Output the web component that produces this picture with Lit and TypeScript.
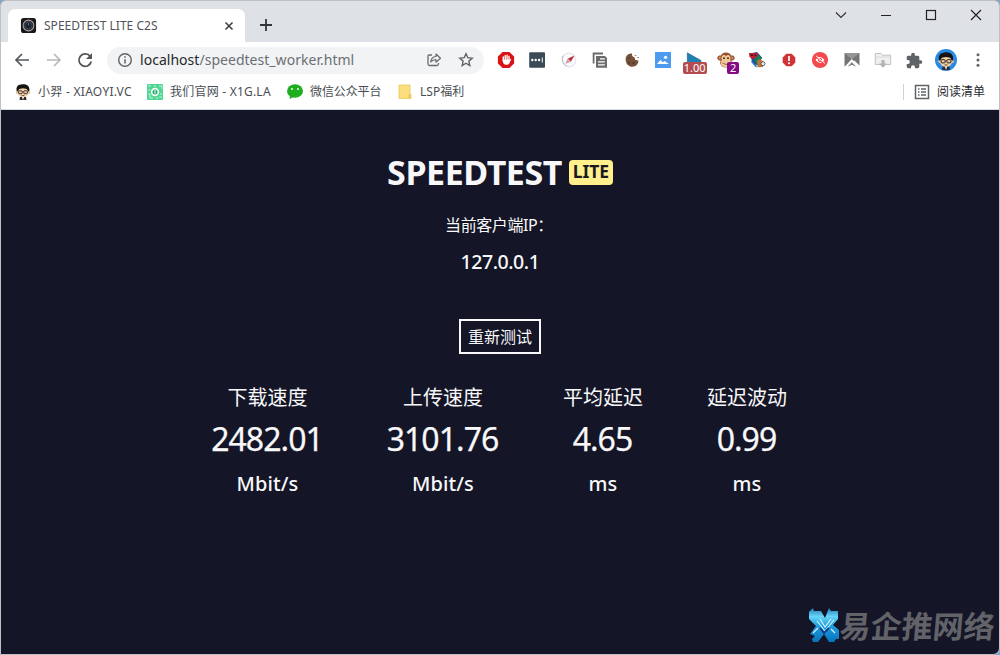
import { LitElement, html, css, svg } from "lit";
import { customElement } from "lit/decorators.js";

const box = (body: unknown, size = 18) =>
  html`<svg width=${size} height=${size} viewBox="0 0 18 18" fill="none">${body}</svg>`;

const face = svg`
  <path d="M6 14 L9 13 L12 14 L12.500 17 H5.500Z" fill="#2c2c2e"/>
  <path d="M8 14h2l-1 3z" fill="#fff"/>
  <ellipse cx="9" cy="9.300" rx="5.700" ry="5" fill="#f0cfab"/>
  <circle cx="3" cy="9.500" r="1.200" fill="#e6bd95"/><circle cx="15" cy="9.500" r="1.200" fill="#e6bd95"/>
  <path d="M2.800 8.500C1.800 4 3.500 1.800 7 1.500c5-1.300 9.300 1 8.300 7L13.800 8 12.800 6 9 5.300 5.200 6 4.200 8z" fill="#171411"/>
  <rect x="4.600" y="7.800" width="3.600" height="2.900" rx=".8" stroke="#2b211c" stroke-width=".9"/>
  <rect x="9.800" y="7.800" width="3.600" height="2.900" rx=".8" stroke="#2b211c" stroke-width=".9"/>
  <path d="M8.200 8.800h1.600M7.700 12.500h2.600" stroke="#5b3b30" stroke-width=".8"/>`;

const extensions = [
  box(svg`<path d="M5.600.9h6.800l4.700 4.700v6.800l-4.700 4.700H5.600L.9 12.400V5.600z" fill="#db1214"/>
    <path d="M6.300 9.500V6M8.200 9V4.600M10.100 9V4.200M12 9V5.400" stroke="#fff" stroke-width="1.400" stroke-linecap="round"/>
    <path d="M5.600 8.700h7l.9-.9c.5-.3.900.1.600.6L12.300 12.600c-1 1.600-4.300 1.700-5.500.2-.8-1-1.200-2.300-1.200-4.100z" fill="#fff"/>`),
  box(svg`<rect x="1.200" y="1.300" width="15.800" height="15.400" rx="1" fill="#3a4b57"/>
    <circle cx="4.300" cy="9" r="1.200" fill="#fff"/><circle cx="7.700" cy="9" r="1.200" fill="#fff"/><circle cx="11.100" cy="9" r="1.200" fill="#fff"/><path d="M14.300 6.500v5" stroke="#fff"/>`),
  box(svg`<circle cx="9" cy="9" r="6.800" fill="#fafbfc" stroke="#e2e5ea" stroke-width="1.200"/><path d="M3.500 4.500C.8 8 3 13.500 7 15" stroke="#aebbd0"/>
    <path d="M5.500 12.500 8 7.500 14.500 4.500 11 10.500z" fill="#bd3145"/><path d="M5.500 12.500 8 7.500l3 3z" fill="#dca7ad"/>`),
  box(svg`<path d="M2.600 12.500V2.500H12" stroke="#6b6b6b" stroke-width="1.800"/><path d="M5 5h9l2 2v9.800H5z" fill="#6b6b6b"/>
    <path d="M9 7.800h4.800M7 10.800h6.800M7 13.800h6.800" stroke="#fff" stroke-width="1.300"/>`),
  box(svg`<path d="M9 2.600C5 2 2.300 5.200 2.700 9.200c.4 4.200 3.300 6.500 6.600 6.500 3.500 0 6.200-2.700 6.100-6.200l-3-.5-1-2.500L9.200 5z" fill="#765139"/>
    <path d="M11.500 4.500h2M14 6.500h2" stroke="#9b7b67" stroke-width=".8"/><circle cx="6" cy="7" r=".8" fill="#4b3222"/><circle cx="6" cy="11.800" r=".9" fill="#4b3222"/><circle cx="10.500" cy="12" r=".9" fill="#4b3222"/>`),
  box(svg`<path d="M1 1h16v16H1z" fill="#4d9bef"/><path d="m3 13 3.400-4 2.400 2.300 1.800-1.400L15 13z" fill="#fff"/><circle cx="11.600" cy="6.300" r="1.600" fill="#fff"/>`),
  html`${box(svg`<path d="M2.300 1.800 16 9.500v3H2.300z" fill="#1e81b3" stroke="#175e82" stroke-width=".6"/>`)}<span class="badge rate">1.00</span>`,
  html`${box(svg`<circle cx="2.900" cy="7" r="2.100" fill="#dd8050" stroke="#74402b"/><circle cx="15.100" cy="7" r="2.100" fill="#dd8050" stroke="#74402b"/>
    <path d="M4 4.500C5 .5 13 .5 14 4.500l.8 7.800C14 18 4 18 3.200 12.300z" fill="#9a5030"/><path d="M4.800 8.500C3.500 4 8 2.500 9 5.500c1-3 5.500-1.500 4.200 3l1.100 4c-1 5-9.600 5-10.600 0z" fill="#f1c898"/>
    <circle cx="7" cy="7.200" r=".9" fill="#2b1710"/><circle cx="11" cy="7.200" r=".9" fill="#2b1710"/><path d="M5.500 12q3.500 3 7 0" stroke="#8d482d" stroke-width=".8"/>`)}<span class="badge count">2</span>`,
  box(svg`<path d="M1.500 2.500 9 1l5 5.500-3.500 8L5 13z" fill="#244b9b"/><path d="M1 2h8.500v3.500L5 8 1.500 6z" fill="#c71f2d"/><path d="m6 9 5-5 3 3-5 6z" fill="#178154"/>
    <path d="M2.500 4.200H5M6.500 4.200H8" stroke="#321a23" stroke-width="1.500"/><path d="M9 10.500 11 8l4 2v6l-5.500.3z" fill="#ba753c"/><circle cx="15" cy="12.700" r="2" fill="#eee" stroke="#333" stroke-width=".7"/><path d="m3.500 10 5 6" stroke="#2879bd" stroke-width="1.500"/>`),
  box(svg`<path d="M6.300 2.800h5.400l3.600 3.600v5.200l-3.600 3.600H6.300l-3.600-3.600V6.400z" fill="#cf3439"/><path d="M9 5.100v4.800" stroke="#fff" stroke-width="1.700"/><circle cx="9" cy="12.300" r="1" fill="#fff"/>`),
  box(svg`<circle cx="9" cy="9" r="8.100" fill="#f4494d"/><path d="M4.500 9q4.500-6 9 0-4.500 6-9 0z" fill="#fff"/><circle cx="9" cy="9" r="1.700" stroke="#f4494d"/><path d="m4.700 5.700 8.800 7.500" stroke="#f4494d"/><path d="m5.100 4.900 8.800 7.500" stroke="#fff"/>`),
  box(svg`<path d="M1.500 2h15v12.500l-5-5-10 6z" fill="#757575"/><path d="M1.500 2h15L8.800 8.500z" fill="#959595"/><path d="m1.500 16 7.300-8 7.700 8-3.400-.2-4.300-4.300-4.300 4.300z" fill="#fff"/><path d="m4.500 15.800 4.300-4.600 4.300 4.600-4.300-2z" fill="#777"/>`),
  box(svg`<path d="M1.300 2.500h5.500l1.700 1.700h8.200v9.300H1.300z" fill="#efefef" stroke="#c2c2c2"/><path d="M2 6h14" stroke="#dadada"/><path d="M7.500 9h3v3.500H13L9 16.800 5 12.500h2.500z" fill="#b3b3b3"/>`),
  html`<svg width="17" height="17" viewBox="1 0 23 23"><path fill="#5f6368" d="M20.500 11H19V7a2 2 0 0 0-2-2h-4V3.500a2.500 2.500 0 0 0-5 0V5H4a2 2 0 0 0-2 2v3.800h1.500a2.700 2.700 0 0 1 0 5.400H2V20a2 2 0 0 0 2 2h3.800v-1.500a2.700 2.700 0 0 1 5.400 0V22H17a2 2 0 0 0 2-2v-4h1.500a2.500 2.500 0 0 0 0-5z"/></svg>`,
  html`<span class="avatar">${box(face, 20)}</span>`,
  box(svg`<g fill="#5f6368"><circle cx="9" cy="3.700" r="1.500"/><circle cx="9" cy="9" r="1.500"/><circle cx="9" cy="14.300" r="1.500"/></g>`),
];

const stats = [
  ["下载速度", "2482.01", "Mbit/s"],
  ["上传速度", "3101.76", "Mbit/s"],
  ["平均延迟", "4.65", "ms"],
  ["延迟波动", "0.99", "ms"],
];

@customElement("app-root")
export class AppRoot extends LitElement {
  static styles = css`
    :host { display: block; width: 1000px; height: 655px; background: #7fa6cf; font-family: "Noto Sans", "Noto Sans CJK SC", sans-serif; }
    * { box-sizing: border-box; }
    svg { display: block; flex: none; }
    .window { width: 1000px; height: 655px; border: 1px solid #bfc0c3; border-radius: 5px 5px 7px 0; overflow: hidden; display: flex; flex-direction: column; background: #141526; }
    .tabs { height: 41px; flex: none; background: #dee1e6; display: flex; align-items: flex-start; }
    .tab { margin: 8px 0 0 7px; width: 237px; height: 33px; background: #fff; border-radius: 7px 7px 0 0; display: flex; align-items: center; padding: 0 9px 0 12px; }
    .title { margin-left: 7px; flex: 1; font-size: 12px; letter-spacing: .02px; color: #50545a; white-space: nowrap; }
    .plus { margin: 16px 0 0 13px; }
    .controls { margin: 5px 0 0 auto; display: grid; grid-template-columns: repeat(4, 45.200px); width: 180.800px; justify-items: center; }
    .toolbar { height: 36px; flex: none; background: #fff; display: flex; align-items: center; }
    .nav { width: 106px; display: flex; padding-left: 11px; gap: 11.500px; }
    .address { width: 377px; height: 27px; border-radius: 14px; background: #f1f3f4; display: flex; align-items: center; padding: 0 9px 0 9px; }
    .url { margin-left: 6px; flex: 1; font-size: 14px; line-height: 20px; letter-spacing: .03px; color: #6b6f74; white-space: nowrap; }
    .url b { font-weight: 400; color: #27292c; }
    .share { margin-right: 14px; }
    .extensions { margin-left: 6px; display: grid; grid-template-columns: repeat(16, 31.460px); }
    .ext { position: relative; display: flex; align-items: center; justify-content: center; height: 28px; }
    .badge { position: absolute; border-radius: 2px; color: #fff; font-size: 11px; line-height: 12px; height: 12px; text-align: center; }
    .rate { left: 4px; top: 16px; width: 24px; background: #b34b50; }
    .count { left: 17px; top: 16px; width: 12px; background: #850985; }
    .avatar { width: 22px; height: 22px; border-radius: 50%; background: #258be5; display: flex; align-items: flex-end; justify-content: center; }
    .bookmarks { height: 32px; flex: none; background: #fff; border-bottom: 1px solid #d7dae0; display: flex; align-items: center; padding: 0 14px 4px 13px; font-size: 12px; line-height: 18px; color: #4a4d52; white-space: nowrap; }
    .mark { display: flex; align-items: center; gap: 6px; }
    .mark span { padding-top: 1px; }
    .m1 { width: 132px; } .m2 { width: 140px; } .m3 { width: 110px; }
    .m1 span { letter-spacing: .28px; }
    .m2 span { letter-spacing: .22px; }
    .m3 span { letter-spacing: -.1px; }
    .reading { margin-left: auto; border-left: 1px solid #cfd1d4; padding-left: 9px; height: 16px; color: #27292c; }
    .page { flex: 1; min-height: 0; color: #f8f8fa; display: flex; flex-direction: column; align-items: center; }
    .brand { display: flex; margin-top: 42px; height: 40px; align-items: center; }
    .name { font-size: 34px; line-height: 40px; font-weight: 700; letter-spacing: -.45px; }
    .lite { margin-left: 7px; width: 44px; height: 25px; border-radius: 4px; background: #fff08b; color: #181923; font-size: 17.500px; line-height: 23px; font-weight: 700; text-align: center; }
    .iplabel { margin: 21px 2px 0 0; font-size: 16px; line-height: 24px; letter-spacing: -.4px; }
    .ip { margin-top: 12px; font-size: 19.500px; line-height: 26px; letter-spacing: -.45px; font-weight: 500; }
    .retry { margin-top: 44px; width: 82px; height: 35px; border: 2px solid #f8f8fa; background: transparent; color: inherit; font: 16px/24px "Noto Sans CJK SC", sans-serif; padding: 0 0 1px; }
    .stats { margin: 30px 1px 0 0; display: grid; grid-template-columns: 111px 112px 80px 80px; column-gap: 64px; text-align: center; }
    .stat { display: flex; flex-direction: column; align-items: center; white-space: nowrap; }
    .label { font-size: 20px; line-height: 28px; }
    .value { font-size: 32px; line-height: 44px; margin-top: 5px; margin-right: 1px; letter-spacing: -.950px; -webkit-text-stroke: .25px #f8f8fa; }
    .unit { font-size: 20px; line-height: 28px; margin-top: 9px; font-weight: 500; letter-spacing: .1px; }
    .watermark { align-self: flex-end; margin-top: auto; height: 54px; width: 191px; display: flex; align-items: center; padding-bottom: 4px; color: #626269; font: 600 31px/44px "Noto Sans CJK SC", sans-serif; }
    .watermark span { transform: skewX(-5deg); }
  `;

  render() {
    return html`<div class="window">
      <div class="tabs">
        <div class="tab">
          ${box(svg`<rect x="1" y="1" width="16" height="16" rx="3" fill="#181819"/><circle cx="9" cy="9" r="5.700" fill="#2e3035" stroke="#a9a09f" stroke-width="1.100"/><circle cx="9" cy="9" r="3.500" fill="#17202b" stroke="#41464e"/><path d="M9 6.500v2.500" stroke="#4f82b8"/>`, 17)}
          <span class="title">SPEEDTEST LITE C2S</span>
          <svg width="14" height="14" viewBox="0 0 14 14"><path d="m3.500 3.500 7 7m0-7-7 7" stroke="#3c4043" stroke-width="1.600"/></svg>
        </div>
        <svg class="plus" width="16" height="16" viewBox="0 0 16 16"><path d="M8 2v12M2 8h12" stroke="#333639" stroke-width="1.800"/></svg>
        <div class="controls">
          ${box(svg`<path d="m4 6.500 5 5 5-5" stroke="#333" stroke-width="1.200"/>`)}
          ${box(svg`<path d="M4 9.500h10" stroke="#222" stroke-width="1.200"/>`)}
          ${box(svg`<rect x="4.500" y="4.500" width="9" height="9" stroke="#222" stroke-width="1.200"/>`)}
          ${box(svg`<path d="m4 4 10 10m0-10L4 14" stroke="#222" stroke-width="1.200"/>`)}
        </div>
      </div>
      <div class="toolbar">
        <div class="nav">
          <svg width="20" height="20" viewBox="0 0 20 20"><path d="M17 10H4m6-6-6 6 6 6" fill="none" stroke="#53575b" stroke-width="1.700"/></svg>
          <svg width="20" height="20" viewBox="0 0 20 20"><path d="M3 10h13m-6-6 6 6-6 6" fill="none" stroke="#b6b8bb" stroke-width="1.700"/></svg>
          <svg width="20" height="20" viewBox="0 0 20 20"><path d="M15.200 6.500A6.200 6.200 0 1 0 16.200 11.500" fill="none" stroke="#53575b" stroke-width="1.800"/><path d="M17 3v6h-6z" fill="#53575b"/></svg>
        </div>
        <div class="address">
          ${box(svg`<circle cx="9" cy="9" r="6.300" stroke="#5f6368" stroke-width="1.400"/><path d="M9 8.200v4.300M9 5.200v1.500" stroke="#5f6368" stroke-width="1.500"/>`)}
          <span class="url"><b>localhost</b>/speedtest_worker.html</span>
          <svg class="share" width="18" height="18" viewBox="0 0 18 18" fill="none"><path d="M7 4H4Q3 4 3 5v8q0 1.500 1.500 1.500H12q1.500 0 1.500-1.500v-1" stroke="#686c70" stroke-width="1.300"/><path d="M5.800 11C6 7.500 8 5.700 11 5.500V3l4.500 4.200-4.500 4V8.700c-2.500 0-4 .7-5.200 2.300z" stroke="#686c70" stroke-width="1.200" stroke-linejoin="round"/></svg>
          ${box(svg`<path d="m9 2.700 1.800 4 4.400.5-3.300 2.900.9 4.400L9 12.200l-3.800 2.300.9-4.400-3.300-2.900 4.400-.5z" stroke="#5f6368" stroke-width="1.400"/>`)}
        </div>
        <div class="extensions">${extensions.map((icon) => html`<div class="ext">${icon}</div>`)}</div>
      </div>
      <div class="bookmarks">
        <div class="mark m1">${box(face)}<span>小羿 - XIAOYI.VC</span></div>
        <div class="mark m2">${box(svg`<rect x="1" y="1" width="16" height="16" rx="1" fill="#4fd693"/><path d="M2 3h3M9 2v2M13 3h3v3M2 7h2M2 11h2v4h3m4-1v2m3-5h2m-3 3h3" stroke="#c5f2db"/><circle cx="9" cy="9" r="4.200" fill="#effcf5"/><circle cx="9" cy="9" r="2.500" fill="#24a769"/><path d="M10 7.700H8.200L9.800 10H8" stroke="#fff" stroke-width=".7"/>`)}<span>我们官网 - X1G.LA</span></div>
        <div class="mark m3">${box(svg`<ellipse cx="9" cy="8" rx="8" ry="6.700" fill="#20ae20"/><path d="m4 12-.5 4 4-2z" fill="#20ae20"/><circle cx="6" cy="6" r="1" fill="#eaffea"/><circle cx="12" cy="6" r="1" fill="#eaffea"/>`)}<span>微信公众平台</span></div>
        <div class="mark">${box(svg`<path d="M3 2h11v9h1v4.500H3z" fill="#fbdf7d" stroke="#e9c65b" stroke-width=".8"/><path d="M12 11.500h3v4h-3z" fill="#efcc64"/>`)}<span>LSP福利</span></div>
        <div class="mark reading">${box(svg`<rect x="2.500" y="2.500" width="13" height="13" stroke="#5f6368" stroke-width="1.500"/><path d="M5 6h1.500M8 6h5M5 9h1.500M8 9h5M5 12h1.500M8 12h5" stroke="#5f6368" stroke-width="1.300"/>`)}<span>阅读清单</span></div>
      </div>
      <div class="page">
        <div class="brand"><span class="name">SPEEDTEST</span><span class="lite">LITE</span></div>
        <div class="iplabel">当前客户端IP：</div>
        <div class="ip">127.0.0.1</div>
        <button class="retry">重新测试</button>
        <div class="stats">${stats.map(([label, value, unit]) => html`<div class="stat"><span class="label">${label}</span><span class="value">${value}</span><span class="unit">${unit}</span></div>`)}</div>
        <div class="watermark">
          <svg width="32" height="36" viewBox="0 0 32 36">
            <defs><linearGradient id="blue" x1="0" y1="0" x2="0" y2="1"><stop stop-color="#2478b5"/><stop offset=".25" stop-color="#67d5f7"/><stop offset=".55" stop-color="#1d9bde"/><stop offset="1" stop-color="#0874bd"/></linearGradient></defs>
            <path d="M1 5 5 1l1 3h7l4 7 4-10 2 3h7v8l-5 6 6 5v9h-3l-2 3h-5l-5-8-6 8H5l-1-3 3-3-5-2 6-8-7-7z" fill="url(#blue)"/>
            <path d="m9 14 8 10 9-11M12 12l5 8 6-8M10 21l-5 5m18-4 4 4" fill="none" stroke="#d7f6ff" stroke-width="1.100"/>
            <path d="m12 21 4 5 5-5" fill="none" stroke="#153580" stroke-width="1.800"/>
          </svg><span>易企推网络</span>
        </div>
      </div>
    </div>`;
  }
}
